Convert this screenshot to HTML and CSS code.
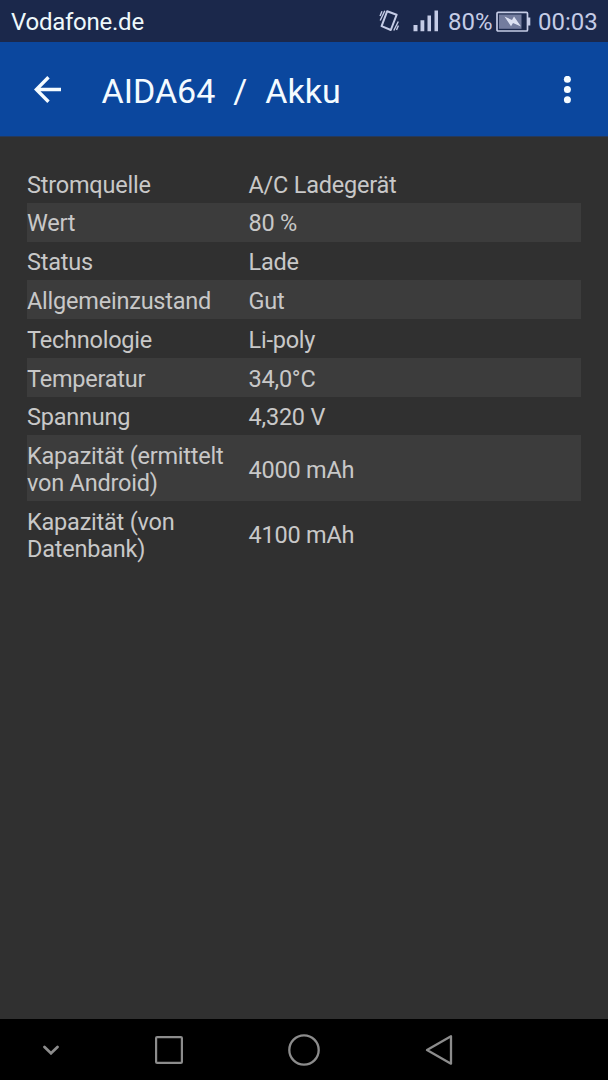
FILE: index.html
```html
<!DOCTYPE html>
<html lang="de">
<head>
  <meta charset="UTF-8">
  <meta name="viewport" content="width=device-width, initial-scale=1.0">
  <title>AIDA64 / Akku</title>
  <link rel="stylesheet" href="styles.css">
</head>
<body>
  <div class="screen">
    <div class="status-bar">
      <span class="carrier">Vodafone.de</span>
      <svg class="vibrate-icon" width="20" height="22" viewBox="0 0 20 22">
        <path d="M8.2 1.200 L17.600 4.800 L11.800 20 L2.600 16.200 Z" fill="none" stroke="#c5cce6" stroke-width="2" stroke-linejoin="round"/>
        <path d="M1 6L3 1.200 M1.200 10.500L5.800 0.800 M14.800 20.500L19.300 11.500 M17.500 20L19.400 15.500" fill="none" stroke="#c5cce6" stroke-width="1.400"/>
      </svg>
      <svg class="signal-icon" width="25" height="22" viewBox="0 0 25 22">
        <path d="M0.500 15h4v6.300h-4z M7.500 10.300h3.800v11h-3.800z M14.500 5.500h3.500v15.800h-3.500z M21.500 0.500h3.500v20.800h-3.500z" fill="#c5cce6"/>
      </svg>
      <span class="percent">80%</span>
      <svg class="battery-icon" width="35" height="22" viewBox="0 0 35 22">
        <rect x="1" y="1.400" width="30.500" height="18.600" rx="1" fill="none" stroke="#c5cce6" stroke-width="1.700"/>
        <rect x="3" y="3.500" width="22.500" height="14.300" fill="#737c9e"/>
        <path d="M32 6.500h2.300v8h-2.300z" fill="#c5cce6"/>
        <path d="M8.500 5.500 L16 9 L18 5.500 L25 15.500 L17 12 L15 15.300 Z" fill="#dce1f2"/>
      </svg>
      <span class="clock">00:03</span>
    </div>

    <div class="app-bar">
      <svg class="back-icon" width="28" height="28" viewBox="0 0 28 28">
        <path d="M27 13.500H2.500 M14.500 1.300L2.300 13.500L14.500 25.700" fill="none" stroke="#f4fbff" stroke-width="3.400"/>
      </svg>
      <h1 class="title"><span>AIDA64</span><span>/</span><span>Akku</span></h1>
      <svg class="menu-icon" width="8" height="28" viewBox="0 0 8 28">
        <circle cx="4.400" cy="3.300" r="3.500" fill="#f4fbff"/>
        <circle cx="4.400" cy="13.500" r="3.500" fill="#f4fbff"/>
        <circle cx="4.400" cy="23.700" r="3.500" fill="#f4fbff"/>
      </svg>
    </div>

    <div class="content">
      <div class="row"><span class="label">Stromquelle</span><span class="value">A/C Ladegerät</span></div>
      <div class="row"><span class="label">Wert</span><span class="value">80 %</span></div>
      <div class="row"><span class="label">Status</span><span class="value">Lade</span></div>
      <div class="row"><span class="label">Allgemeinzustand</span><span class="value">Gut</span></div>
      <div class="row"><span class="label">Technologie</span><span class="value">Li-poly</span></div>
      <div class="row"><span class="label">Temperatur</span><span class="value">34,0°C</span></div>
      <div class="row"><span class="label">Spannung</span><span class="value">4,320 V</span></div>
      <div class="row"><span class="label">Kapazität (ermittelt<br>von Android)</span><span class="value">4000 mAh</span></div>
      <div class="row"><span class="label">Kapazität (von<br>Datenbank)</span><span class="value">4100 mAh</span></div>
    </div>

    <div class="nav-bar">
      <svg class="nav-hide" width="16" height="10" viewBox="0 0 16 10">
        <path d="M1.500 2L8 8.300L14.500 2" fill="none" stroke="#8c8c8c" stroke-width="2.700" stroke-linecap="round"/>
      </svg>
      <svg class="nav-recent" width="28" height="28" viewBox="0 0 28 28">
        <rect x="1.100" y="1.100" width="25.800" height="25.800" rx="1" fill="none" stroke="#8c8c8c" stroke-width="2.200"/>
      </svg>
      <svg class="nav-home" width="32" height="32" viewBox="0 0 32 32">
        <circle cx="16" cy="16" r="14.700" fill="none" stroke="#8c8c8c" stroke-width="2.300"/>
      </svg>
      <svg class="nav-back" width="28" height="32" viewBox="0 0 28 32">
        <path d="M26 2.300V29.700L2 16Z" fill="none" stroke="#8c8c8c" stroke-width="2.300" stroke-linejoin="round"/>
      </svg>
    </div>
  </div>
</body>
</html>
```

FILE: styles.css
```css
body {
  margin: 0;
  font-family: Roboto, "Noto Sans", sans-serif;
  background: #303030;
}
.screen {
  display: flex;
  flex-direction: column;
  height: 1080px;
}
.status-bar {
  display: flex;
  align-items: center;
  height: 42px;
  box-sizing: border-box;
  padding: 0 10px 0 11px;
  background: #1b284b;
  color: #c5cce6;
  font-size: 24px;
  line-height: 42px;
}
.carrier {
  flex: 1;
  color: #eef8fb;
  letter-spacing: -0.25px;
  padding-top: 2px;
}
.vibrate-icon {
  margin-right: 14px;
}
.signal-icon {
  margin-right: 10px;
}
.percent {
  width: 48px;
  padding-top: 2px;
}
.battery-icon {
  margin: 1px 7px 0 0;
}
.clock {
  width: 60px;
  padding-top: 2px;
}
.app-bar {
  display: flex;
  align-items: center;
  box-sizing: border-box;
  height: 95px;
  padding: 1px 37px 0 34px;
  background: #0b479e;
  border-bottom: 1px solid #26395a;
}
.title {
  display: flex;
  flex: 1;
  gap: 18px;
  margin: 2px 0 0 39.5px;
  color: #f4fbff;
  font-size: 34px;
  font-weight: 400;
}
.content {
  flex: 1;
  padding: 27px 27px 0;
  color: #c8c8c8;
  font-size: 23.5px;
  line-height: 27px;
  letter-spacing: -0.22px;
}
.row {
  display: flex;
  align-items: center;
  padding: 7.7px 0 4.1px;
}
.row:nth-child(even) {
  background: #3c3c3c;
}
.label {
  width: 221.5px;
}
.nav-bar {
  display: flex;
  align-items: center;
  height: 61px;
  padding-left: 43px;
  background: #000;
}
.nav-recent {
  margin-left: 96px;
}
.nav-home {
  margin-left: 105px;
}
.nav-back {
  margin-left: 105px;
}
```
